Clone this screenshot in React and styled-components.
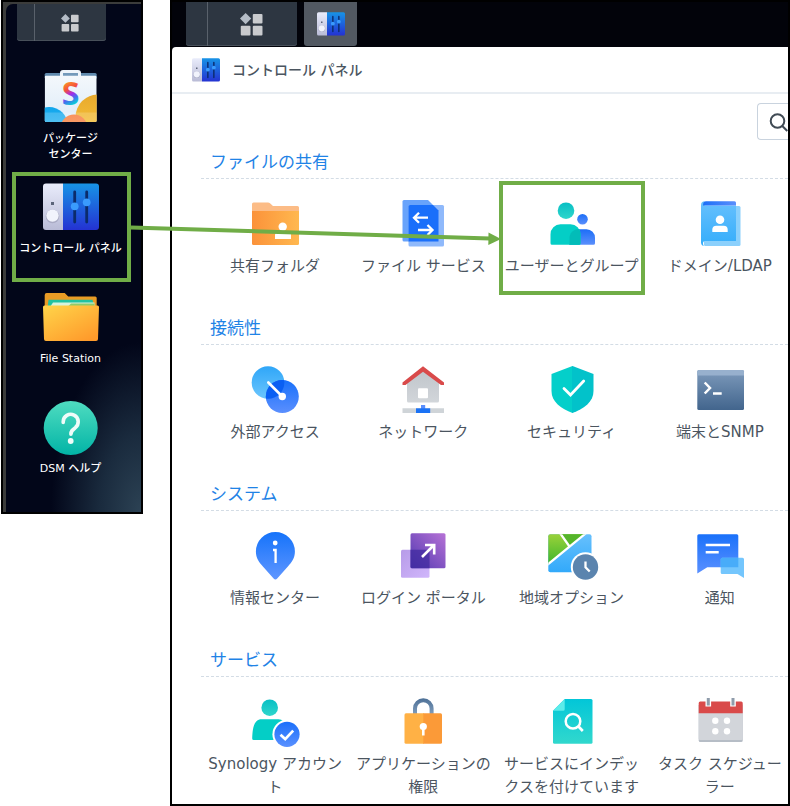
import styled, { createGlobalStyle } from "styled-components";

const GlobalStyle = createGlobalStyle`
  * {
    box-sizing: border-box;
  }
  body {
    margin: 0;
    background: #ffffff;
  }
  body, button, input {
    font-family: "DejaVu Sans", "Noto Sans CJK JP", sans-serif;
  }
  button {
    border: none;
    padding: 0;
    background: none;
    cursor: pointer;
  }
  svg {
    display: block;
    flex: none;
    overflow: visible;
  }
`;

const Page = styled.div`
  position: relative;
  display: flex;
  align-items: flex-start;
  gap: 27px;
  padding-left: 1px;
  line-break: strict;
`;

const Desktop = styled.aside`
  flex: none;
  width: 142px;
  padding: 2px 0 0 3px;
  border: 2px solid #000000;
  background: #3b3c3b;
`;

const Wallpaper = styled.div`
  padding-bottom: 10px;
  border-top-left-radius: 7px;
  background:
    radial-gradient(ellipse 90px 170px at 100% 100%, #2c4254 0%, #1a2b3e 45%, transparent 100%),
    #020619;
`;

const DesktopBar = styled.div`
  display: flex;
  padding-left: 11px;
`;

const MenuButton = styled.button`
  display: flex;
  align-items: center;
  width: ${({ $large }) => ($large ? "111px" : "89px")};
  height: ${({ $large }) => ($large ? "44px" : "37px")};
  padding-left: ${({ $large }) => ($large ? "21px" : "17px")};
  border-radius: 0 0 3px 3px;
  background: #2d3641;
  box-shadow: inset 0 -1px 0 #48505a;
`;

const MenuFace = styled.span`
  flex: 1;
  display: flex;
  justify-content: center;
  align-items: center;
  height: 100%;
  padding-right: 2px;
  border-left: 1px solid #59616b;
`;

const Shortcuts = styled.nav`
  display: flex;
  flex-direction: column;
  padding: 21px 10px 0 6px;
`;

const Shortcut = styled.button`
  display: flex;
  flex-direction: column;
  align-items: center;
  justify-content: flex-start;
  gap: 6px;
  height: 110px;
  padding: 7px 2px 0 0;
  color: #ffffff;
  font-size: 11px;
  font-weight: 500;
  line-height: 16px;
  white-space: pre-line;
  outline: ${({ $marked }) => ($marked ? "4px solid #70ad47" : "none")};
  outline-offset: -4px;
`;

const Workspace = styled.main`
  flex: 1;
  min-width: 0;
  overflow: hidden;
  border: 2px solid #000000;
  background: #02030a;
`;

const Taskbar = styled.div`
  display: flex;
  gap: 7px;
  height: 45px;
  padding-left: 14px;
`;

const TaskButton = styled.button`
  display: flex;
  justify-content: center;
  align-items: center;
  width: 53px;
  height: 44px;
  border-radius: 0 0 3px 3px;
  background: #525962;
`;

const Window = styled.section`
  border-top-left-radius: 4px;
  background: #ffffff;
`;

const TitleBar = styled.header`
  display: flex;
  align-items: center;
  gap: 12px;
  height: 47px;
  padding-left: 20px;
  border-bottom: 2px solid #e8edf2;
`;

const WindowTitle = styled.h1`
  margin: 0;
  color: #4b555f;
  font-size: 14px;
  font-weight: 500;
  line-height: 20px;
`;

const SearchRow = styled.div`
  display: flex;
  justify-content: flex-end;
  padding: 9px 0 4px;
`;

const SearchBox = styled.label`
  display: flex;
  align-items: center;
  width: 31px;
  height: 37px;
  padding-left: 11px;
  overflow: hidden;
  border: 1px solid #c9d3de;
  border-right: none;
  border-radius: 4px 0 0 4px;

  input {
    width: 120px;
    border: none;
    outline: none;
    font-size: 14px;
  }
`;

const Categories = styled.div`
  display: flex;
  flex-direction: column;
  gap: 15px;
  padding: 0 0 5px 29px;
`;

const CategoryTitle = styled.h2`
  margin: 0;
  padding: 2px 0 0 9px;
  border-bottom: 1px dashed #d3dce5;
  color: #1f83e6;
  font-size: 17px;
  font-weight: 400;
  line-height: 32px;
`;

const TileGrid = styled.div`
  display: grid;
  grid-template-columns: repeat(4, minmax(0, 1fr));
  gap: 2px;
  margin-right: -5px;
  padding: 2px 0 0 1px;
`;

const Tile = styled.button`
  display: flex;
  flex-direction: column;
  align-items: center;
  justify-content: flex-start;
  gap: 7px;
  min-height: 114px;
  padding: 19px 4px 0;
  color: #4b555f;
  font-size: 15px;
  line-height: 23px;
  outline: ${({ $marked }) => ($marked ? "4px solid #70ad47" : "none")};
  outline-offset: -4px;
`;

const Arrow = styled.svg`
  position: absolute;
  left: 131px;
  top: 221px;
  pointer-events: none;
`;

const Gradient = ({ id, from, to, x2 = 0, y2 = 1 }) => (
  <linearGradient id={id} x1="0" y1="0" x2={x2} y2={y2}>
    <stop offset="0" stopColor={from} />
    <stop offset="1" stopColor={to} />
  </linearGradient>
);

const Icon = ({ children }) => (
  <svg width="48" height="48" viewBox="0 0 48 48" fill="none" aria-hidden="true">
    {children}
  </svg>
);

const BigIcon = ({ children }) => (
  <svg width="56" height="56" viewBox="0 0 56 56" fill="none" aria-hidden="true">
    {children}
  </svg>
);

const MenuIcon = ({ size }) => (
  <svg width={size} height={size} viewBox="0 0 18 18" fill="#c9cbce" aria-hidden="true">
    <path d="M4.4 0 8.8 4.4 4.4 8.8 0 4.4z" fill="#b4bcc6" />
    <rect x="10" y="0.8" width="7.6" height="7.4" rx="0.8" />
    <rect x="0.6" y="10" width="7.6" height="7.6" rx="0.8" />
    <rect x="10" y="10" width="7.6" height="7.6" rx="0.8" />
  </svg>
);

const PanelArt = ({ id }) => (
  <>
    <defs>
      <Gradient id={`${id}-l`} from="#e9ecfb" to="#b9bbd6" />
      <Gradient id={`${id}-r`} from="#1793e6" to="#2432d2" />
    </defs>
    <path d="M20 4.5H3a3 3 0 0 0-3 3V48a3 3 0 0 0 3 3h17z" fill={`url(#${id}-l)`} />
    <path d="M20 4.5h33a3 3 0 0 1 3 3V48a3 3 0 0 1-3 3H20z" fill={`url(#${id}-r)`} />
    <rect x="8" y="23" width="3" height="3" fill="#5b6479" />
    <circle cx="9.5" cy="37.4" r="6.8" fill="#a9abc4" />
    <circle cx="9.5" cy="36.6" r="6.2" fill="#f1f3fc" />
    <path d="M31.7 13v30M43.7 13v30" stroke="#0b2b6b" strokeWidth="2.8" strokeLinecap="round" />
    <circle cx="31.7" cy="27.3" r="3.9" fill="#3a9bfd" />
    <circle cx="43.7" cy="23.3" r="3.9" fill="#3a9bfd" />
  </>
);

const PanelIcon = ({ id }) => (
  <svg width="28" height="26" viewBox="0 2 56 52" fill="none" aria-hidden="true">
    <PanelArt id={id} />
  </svg>
);

const PackageIcon = () => (
  <BigIcon>
    <defs>
      <Gradient id="pk-bag" from="#f4f8fc" to="#dcebf8" />
      <Gradient id="pk-sun" from="#e8a92c" to="#fbc93e" />
      <Gradient id="pk-sea" from="#0fa5ec" to="#4dc6f5" />
      <Gradient id="pk-dune" from="#f77b3c" to="#fb9a55" />
      <linearGradient id="pk-s" x1="0.3" y1="0" x2="0.5" y2="1">
        <stop offset="0.2" stopColor="#fba025" />
        <stop offset="0.42" stopColor="#f5503c" />
        <stop offset="0.56" stopColor="#a32be8" />
        <stop offset="0.68" stopColor="#3f74ee" />
        <stop offset="0.8" stopColor="#0fc4d6" />
      </linearGradient>
      <clipPath id="pk-clip">
        <rect x="1.7" y="6.5" width="52" height="46.5" rx="1.5" />
      </clipPath>
    </defs>
    <rect x="1.7" y="4" width="52" height="6" rx="1.5" fill="#5f89ad" />
    <path d="M17 8V4a3 3 0 0 1 3-3h15a3 3 0 0 1 3 3v4z" fill="#eef4fa" />
    <rect x="20" y="4" width="15" height="4" fill="#7399ba" />
    <g clipPath="url(#pk-clip)">
      <rect x="1.7" y="6.5" width="52" height="47" fill="url(#pk-bag)" />
      <circle cx="55" cy="48" r="22.5" fill="url(#pk-sun)" />
      <circle cx="6" cy="57" r="19" fill="url(#pk-sea)" />
      <circle cx="31" cy="59" r="13.5" fill="url(#pk-dune)" />
      <path d="M0 43.5h56V53H0z" fill="#ffffff" opacity="0.18" />
    </g>
    <text x="27.5" y="36" textAnchor="middle" fontFamily="Open Sans" fontWeight="700" fontSize="32" fill="url(#pk-s)">
      S
    </text>
  </BigIcon>
);

const ControlPanelIcon = () => (
  <BigIcon>
    <PanelArt id="cp-big" />
  </BigIcon>
);

const FileStationIcon = () => (
  <BigIcon>
    <defs>
      <Gradient id="fs-front" from="#ffd54a" to="#ff9a2b" x2={0.8} />
    </defs>
    <path d="M1.7 6a2 2 0 0 1 2-2h18l3.5 3.5h27a1.5 1.5 0 0 1 1.5 1.5V30h-52z" fill="#e99b25" />
    <path d="M5.5 10.7h44l2 8h-47z" fill="#21c2a0" />
    <path d="M10 13.5h41.5v6H6z" fill="#d6f3dc" />
    <path d="M28 14.5h23.5v4H24z" fill="#8fcb6b" />
    <path d="M0 18a1.5 1.5 0 0 1 1.5-1.5h53A1.5 1.5 0 0 1 56 18l-1 32a2 2 0 0 1-2 2H3a2 2 0 0 1-2-2z" fill="url(#fs-front)" />
  </BigIcon>
);

const HelpIcon = () => (
  <BigIcon>
    <defs>
      <Gradient id="help" from="#4fdcc0" to="#02b4a6" />
    </defs>
    <circle cx="27.7" cy="29" r="27" fill="url(#help)" />
    <path
      d="M20.2 23.5v-.8a7.5 7.5 0 1 1 12 6.100c-2.800 2-4.300 3-4.300 6.500"
      stroke="#effcf9"
      strokeWidth="3.6"
      strokeLinecap="round"
    />
    <circle cx="27.7" cy="42" r="2.9" fill="#effcf9" />
  </BigIcon>
);

const SharedFolderIcon = () => (
  <Icon>
    <defs>
      <Gradient id="sf" from="#fb923a" to="#ffb84f" x2={1} y2={0} />
    </defs>
    <path d="M1 4a1.5 1.5 0 0 1 1.5-1.5H17a3 3 0 0 1 2 .8l3 2.7h24.5A1.5 1.5 0 0 1 48 7.5V14H1z" fill="#fcbc86" />
    <path d="M1 11h47v32.500a1.5 1.5 0 0 1-1.5 1.5h-44A1.5 1.5 0 0 1 1 43.500z" fill="url(#sf)" />
    <circle cx="31.7" cy="26.7" r="4.2" fill="#fff" />
    <path d="M24 39v-4a2.5 2.5 0 0 1 2.5-2.5h11A2.5 2.5 0 0 1 40 35v4z" fill="#fff" />
  </Icon>
);

const FileServicesIcon = () => (
  <Icon>
    <path d="M5 0h24l10.5 10.5V40a1.5 1.5 0 0 1-1.5 1.5H5A1.5 1.5 0 0 1 3.5 40V1.5A1.5 1.5 0 0 1 5 0z" fill="#68a3fb" />
    <path d="M11 5h32.5A1.5 1.5 0 0 1 45 6.5V45a1.5 1.5 0 0 1-1.5 1.5H11A1.5 1.5 0 0 1 9.5 45V6.5A1.5 1.5 0 0 1 11 5z" fill="#8fb9fb" />
    <path d="M9.5 6.5A1.5 1.5 0 0 1 11 5h23l5.5 5.500v31h-30z" fill="#1a6ffa" />
    <path d="M29 17.7H14.500m5.500-5-5 5 5 5M19 30h15m-5.500-5 5 5-5 5" stroke="#fff" strokeWidth="2.3" />
  </Icon>
);

const UsersIcon = () => (
  <Icon>
    <defs>
      <Gradient id="us-head" from="#08bfc4" to="#2fd6cc" />
      <Gradient id="us-blue" from="#1c6ef7" to="#5b8ffc" />
    </defs>
    <circle cx="34.5" cy="19.3" r="5.3" fill="url(#us-blue)" />
    <path d="M21 44.7V38a8.5 8.5 0 0 1 8.5-8.7h9A8.5 8.5 0 0 1 47 38v5.200a1.5 1.5 0 0 1-1.5 1.5z" fill="url(#us-blue)" />
    <circle cx="18" cy="10.7" r="8.3" fill="url(#us-head)" />
    <path d="M2.5 43.2V34.500A10 10 0 0 1 12.5 24.300h10A10 10 0 0 1 32.5 34.500v8.700a1.5 1.5 0 0 1-1.5 1.5H4a1.5 1.5 0 0 1-1.5-1.5z" fill="#04cec6" />
    <path d="M21.5 44.7V38c0-4.800 3.500-8.200 8-8.700h1.600c.9 1.600 1.400 3.300 1.400 5.200v8.700a1.5 1.5 0 0 1-1.5 1.5z" fill="#02bcb8" />
  </Icon>
);

const DomainIcon = () => (
  <Icon>
    <defs>
      <Gradient id="dm" from="#67c0fd" to="#34adfb" />
      <Gradient id="dm-spine" from="#1c6ef7" to="#5b8ffc" x2={1} y2={0} />
    </defs>
    <rect x="8" y="6" width="36.5" height="40" rx="1.5" fill="#8bd0fc" />
    <path d="M5 5c0-2.500 1.500-3.700 3.500-3.700V5.500H40V41H9c-1.500 0-2 1-2 2.500 0 1.500.5 2.300 1.500 2.500C6.500 46 5 45 5 42.500z" fill="url(#dm)" />
    <path d="M7 5.600c0-2.800 1-4.300 3-4.300h28.500A1.5 1.5 0 0 1 40 2.800v2.800z" fill="url(#dm-spine)" />
    <circle cx="24" cy="19.7" r="4.3" fill="#fff" />
    <path d="M16.3 32v-2.300a4 4 0 0 1 4-4h7.400a4 4 0 0 1 4 4V32z" fill="#fff" />
  </Icon>
);

const ExternalAccessIcon = () => (
  <Icon>
    <defs>
      <Gradient id="ea-a" from="#2fa6f8" to="#6cc6fd" />
      <Gradient id="ea-b" from="#1870fa" to="#5b8ffe" />
      <clipPath id="ea-clip">
        <circle cx="17" cy="16.5" r="16.3" />
      </clipPath>
    </defs>
    <circle cx="17" cy="16.5" r="16.3" fill="url(#ea-a)" />
    <circle cx="31.3" cy="30.5" r="16.5" fill="url(#ea-b)" />
    <circle cx="31.3" cy="30.5" r="16.5" fill="#0a5ff3" clipPath="url(#ea-clip)" />
    <path d="m17.3 16.5 14 14" stroke="#fff" strokeWidth="2.6" strokeLinecap="round" />
    <circle cx="31.3" cy="30.5" r="3.7" fill="#fff" />
  </Icon>
);

const NetworkIcon = () => (
  <Icon>
    <defs>
      <Gradient id="nw" from="#bfc4ca" to="#d2d6da" />
    </defs>
    <path d="M8 14 24 3l16 11v21a1.5 1.5 0 0 1-1.5 1.500h-29A1.5 1.5 0 0 1 8 35z" fill="url(#nw)" />
    <path d="M24 .3 45 16.500V19h-3L24 5.700 6.500 19h-3v-2.500z" fill="#d94a4a" />
    <rect x="19" y="22.3" width="10" height="10" rx="1" fill="#fff" />
    <path d="M3.5 42.300H45V47H3.500z" fill="#cfd4d8" />
    <path d="M22 39h4.200v4H22z" fill="#5b8ffc" />
    <path d="M17 42.300h14.200V47H17z" fill="#1a72f5" />
  </Icon>
);

const SecurityIcon = () => (
  <Icon>
    <path d="M24.5 0 3.5 8v17c0 11 9.500 17.500 21 22z" fill="#04cfca" />
    <path d="M24 .2l.5-.2 21 8v17c0 11-9.500 17.500-21 22l-.5-.2z" fill="#02c2ca" />
    <path d="m16 22.500 6.500 6.500 13.200-14" stroke="#fff" strokeWidth="2.8" strokeLinecap="round" />
  </Icon>
);

const TerminalIcon = () => (
  <Icon>
    <defs>
      <Gradient id="tm" from="#7d9abb" to="#42658d" />
    </defs>
    <rect x="1.3" y="4" width="46.7" height="40" rx="1.5" fill="url(#tm)" />
    <path d="M1.3 5.500A1.5 1.5 0 0 1 2.800 4h43.700A1.5 1.5 0 0 1 48 5.500v4H1.300z" fill="#97b0cd" />
    <path d="m8.700 16.500 5.300 5.500-5.300 5.500M17 27.500h8.700" stroke="#fff" strokeWidth="2.5" />
  </Icon>
);

const InfoIcon = () => (
  <Icon>
    <defs>
      <Gradient id="in" from="#1573fa" to="#5f96ff" />
    </defs>
    <path d="M24.4 0A19.500 19.500 0 0 0 4.900 19.500c0 6.500 3 10.500 7 15l10.700 12a2.400 2.400 0 0 0 3.600 0l10.700-12c4-4.500 7-8.500 7-15A19.500 19.500 0 0 0 24.400 0z" fill="url(#in)" />
    <circle cx="24.2" cy="11" r="2.4" fill="#fff" />
    <path d="M22 18h2.600v13" stroke="#fff" strokeWidth="2.3" />
  </Icon>
);

const LoginPortalIcon = () => (
  <Icon>
    <defs>
      <Gradient id="lp-back" from="#b79be8" to="#d0b6fb" x2={1} />
      <linearGradient id="lp-front" x1="1" y1="0" x2="0" y2="1">
        <stop offset="0" stopColor="#b672d6" />
        <stop offset="1" stopColor="#5138b0" />
      </linearGradient>
    </defs>
    <rect x="2" y="17.7" width="28.5" height="28" rx="1.5" fill="url(#lp-back)" />
    <rect x="11.5" y="1.3" width="35" height="35" rx="1.5" fill="url(#lp-front)" />
    <path d="M11.5 17.700h19v18.600H13a1.5 1.5 0 0 1-1.5-1.5z" fill="#3d2a9e" opacity="0.7" />
    <path d="M23 25 35 13M26 13h9.200v9.500" stroke="#fff" strokeWidth="2.6" />
  </Icon>
);

const RegionIcon = () => (
  <Icon>
    <defs>
      <Gradient id="rg-green" from="#9bd23a" to="#3eb52c" />
      <Gradient id="rg-sea" from="#67c0fd" to="#31a9fa" />
      <clipPath id="rg-clip">
        <rect x="0.3" y="2.3" width="43.2" height="38" rx="2" />
      </clipPath>
    </defs>
    <g clipPath="url(#rg-clip)">
      <path d="M0 2h44v39H0z" fill="url(#rg-sea)" />
      <path d="M0 2h37L0 32z" fill="url(#rg-green)" />
      <path d="M12.5 2H37L22 14.500z" fill="#55b52a" />
      <path d="M-1 33 38 1.200M12 1l9.500 13.500" stroke="#fff" strokeWidth="2.3" />
    </g>
    <circle cx="37.5" cy="35" r="14.7" fill="#fff" />
    <circle cx="37.5" cy="35" r="12.7" fill="#5b84ae" />
    <path d="M37.5 29.500v5.800l4.200 4.200" stroke="#fff" strokeWidth="2.3" />
  </Icon>
);

const NotificationIcon = () => (
  <Icon>
    <defs>
      <Gradient id="nt" from="#1a71fa" to="#5a90ff" />
    </defs>
    <path d="M2.8 2.300h38a1.5 1.5 0 0 1 1.5 1.500v31.500H11.300L1.300 41.500V3.800a1.5 1.5 0 0 1 1.5-1.500z" fill="url(#nt)" />
    <path d="M26.2 25.700h20.300a1.5 1.5 0 0 1 1.5 1.500V46l-6.500-4H26.200a1.5 1.5 0 0 1-1.5-1.500V27.200a1.5 1.5 0 0 1 1.5-1.500z" fill="#74c6fd" />
    <path d="M24.7 27.200a1.5 1.5 0 0 1 1.5-1.500h16.100v9.600H24.700z" fill="#48acf9" />
    <path d="M9.7 13H34M9.700 20.300h13" stroke="#fff" strokeWidth="2.5" />
  </Icon>
);

const AccountIcon = () => (
  <Icon>
    <defs>
      <Gradient id="ac-head" from="#08bfc4" to="#2fd6cc" />
      <Gradient id="ac-badge" from="#1a6ffa" to="#5a90ff" />
    </defs>
    <circle cx="18.7" cy="9.7" r="8.3" fill="url(#ac-head)" />
    <path d="M1.2 40.500C1.5 33 2 21.300 10.500 21.300h17c8 0 8.500 12 8.700 19.200a1.5 1.5 0 0 1-1.5 1.500h-32a1.5 1.5 0 0 1-1.5-1.500z" fill="#04cec6" />
    <circle cx="36" cy="36.3" r="14.6" fill="#fff" />
    <circle cx="36" cy="36.3" r="12.6" fill="url(#ac-badge)" />
    <path d="m29.5 36.800 4.700 4.300 8-8.500" stroke="#fff" strokeWidth="2.7" />
  </Icon>
);

const PrivilegeIcon = () => (
  <Icon>
    <defs>
      <Gradient id="pv" from="#4c6f96" to="#7f9cbb" />
    </defs>
    <path d="M14 16V10.500a10.300 10.300 0 0 1 20.600 0V16h-4v-5.500a6.300 6.300 0 0 0-12.600 0V16z" fill="url(#pv)" />
    <path d="M7 15.300h18v30.500H7a1.5 1.5 0 0 1-1.5-1.500V16.800A1.5 1.5 0 0 1 7 15.300z" fill="#ffb145" />
    <path d="M24.3 15.300h17.200a1.5 1.5 0 0 1 1.5 1.500v27.500a1.5 1.5 0 0 1-1.5 1.500H24.300z" fill="#fb9a38" />
    <circle cx="24.3" cy="28.5" r="3.6" fill="#fff" />
    <path d="M24.3 29v8.500" stroke="#fff" strokeWidth="2.6" />
  </Icon>
);

const IndexingIcon = () => (
  <Icon>
    <defs>
      <Gradient id="ix" from="#02c6d8" to="#31d8cd" />
    </defs>
    <path d="M16.7 1H43a1.5 1.5 0 0 1 1.5 1.500v41.700a1.5 1.5 0 0 1-1.5 1.500H6.500A1.5 1.5 0 0 1 5 44.200V12.700z" fill="url(#ix)" />
    <path d="M16.7 1v10.200a1.5 1.5 0 0 1-1.5 1.500H5z" fill="#5cecea" />
    <circle cx="25" cy="23.3" r="7.3" stroke="#fff" strokeWidth="2.5" />
    <path d="m30.5 28.500 4.300 4.500" stroke="#fff" strokeWidth="2.7" />
  </Icon>
);

const SchedulerIcon = () => (
  <Icon>
    <rect x="2.7" y="6" width="44" height="38" rx="1.5" fill="#b6bdc6" />
    <rect x="2.7" y="6" width="44" height="36" rx="1.5" fill="#d2d5da" />
    <path d="M4.2 3.500h41a1.5 1.5 0 0 1 1.5 1.500v10.300h-44V5a1.5 1.5 0 0 1 1.5-1.500z" fill="#d94a4a" />
    <path d="M9.5 3h5.600v5.500H9.500zM34.200 3h5.600v5.500h-5.600z" fill="#fff" />
    <path d="M12.3 0v7.500M37 0v7.500" stroke="#8f9cab" strokeWidth="3" />
    <g fill="#fff">
      <circle cx="19.3" cy="22.7" r="3.2" />
      <circle cx="31" cy="22.7" r="3.2" />
      <circle cx="19.3" cy="33.3" r="3.2" />
      <circle cx="31" cy="33.3" r="3.2" />
    </g>
  </Icon>
);

const shortcuts = [
  { label: "パッケージ\nセンター", icon: PackageIcon },
  { label: "コントロール パネル", icon: ControlPanelIcon, marked: true },
  { label: "File Station", icon: FileStationIcon },
  { label: "DSM ヘルプ", icon: HelpIcon },
];

const categories = [
  {
    title: "ファイルの共有",
    items: [
      { label: "共有フォルダ", icon: SharedFolderIcon },
      { label: "ファイル サービス", icon: FileServicesIcon },
      { label: "ユーザーとグループ", icon: UsersIcon, marked: true },
      { label: "ドメイン/LDAP", icon: DomainIcon },
    ],
  },
  {
    title: "接続性",
    items: [
      { label: "外部アクセス", icon: ExternalAccessIcon },
      { label: "ネットワーク", icon: NetworkIcon },
      { label: "セキュリティ", icon: SecurityIcon },
      { label: "端末とSNMP", icon: TerminalIcon },
    ],
  },
  {
    title: "システム",
    items: [
      { label: "情報センター", icon: InfoIcon },
      { label: "ログイン ポータル", icon: LoginPortalIcon },
      { label: "地域オプション", icon: RegionIcon },
      { label: "通知", icon: NotificationIcon },
    ],
  },
  {
    title: "サービス",
    items: [
      { label: "Synology アカウント", icon: AccountIcon },
      { label: "アプリケーションの権限", icon: PrivilegeIcon },
      { label: "サービスにインデックスを付けています", icon: IndexingIcon },
      { label: "タスク スケジューラー", icon: SchedulerIcon },
    ],
  },
];

const App = () => {
  return (
    <>
      <GlobalStyle />
      <Page lang="ja">
        <Desktop>
          <Wallpaper>
            <DesktopBar>
              <MenuButton aria-label="メインメニュー">
                <MenuFace>
                  <MenuIcon size={18} />
                </MenuFace>
              </MenuButton>
            </DesktopBar>
            <Shortcuts>
              {shortcuts.map(({ label, icon: ShortcutIcon, marked }) => (
                <Shortcut key={label} $marked={marked}>
                  <ShortcutIcon />
                  <span>{label}</span>
                </Shortcut>
              ))}
            </Shortcuts>
          </Wallpaper>
        </Desktop>

        <Workspace>
          <Taskbar>
            <MenuButton $large aria-label="メインメニュー">
              <MenuFace>
                <MenuIcon size={23} />
              </MenuFace>
            </MenuButton>
            <TaskButton aria-label="コントロール パネル">
              <PanelIcon id="cp-task" />
            </TaskButton>
          </Taskbar>
          <Window>
            <TitleBar>
              <PanelIcon id="cp-title" />
              <WindowTitle>コントロール パネル</WindowTitle>
            </TitleBar>
            <SearchRow>
              <SearchBox>
                <svg width="20" height="20" viewBox="0 0 20 20" fill="none" stroke="#414b55" strokeWidth="2">
                  <circle cx="8.5" cy="9" r="6.8" />
                  <path d="m13.3 14 5 5" />
                </svg>
                <input type="search" aria-label="検索" />
              </SearchBox>
            </SearchRow>
            <Categories>
              {categories.map(({ title, items }) => (
                <section key={title}>
                  <CategoryTitle>{title}</CategoryTitle>
                  <TileGrid>
                    {items.map(({ label, icon: TileIcon, marked }) => (
                      <Tile key={label} $marked={marked}>
                        <TileIcon />
                        <span>{label}</span>
                      </Tile>
                    ))}
                  </TileGrid>
                </section>
              ))}
            </Categories>
          </Window>
        </Workspace>

        <Arrow width="370" height="26" viewBox="0 0 370 26" aria-hidden="true">
          <path d="M0 6.5 359 17.500" stroke="#70ad47" strokeWidth="4" />
          <path d="M357.5 11.500 370 18l-12.700 6z" fill="#70ad47" />
        </Arrow>
      </Page>
    </>
  );
};

export default App;
